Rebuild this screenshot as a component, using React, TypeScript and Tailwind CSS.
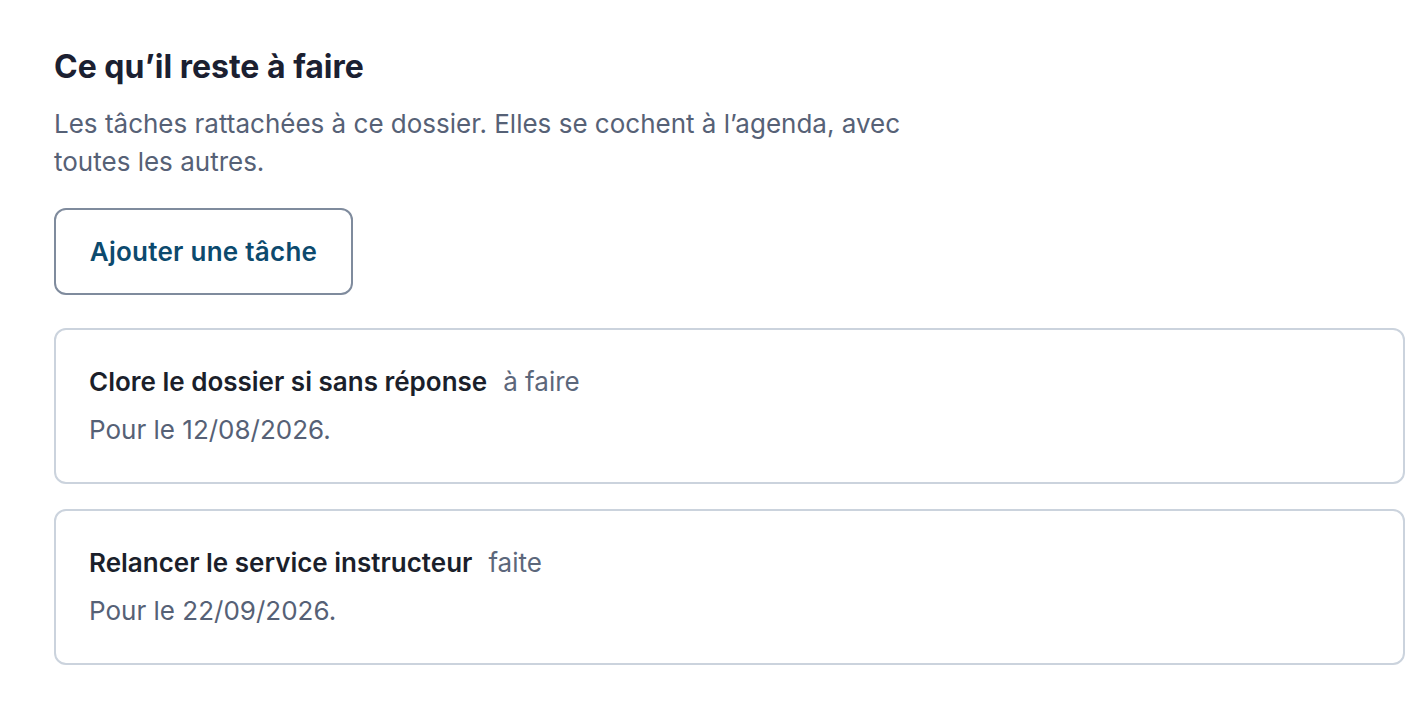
import React from 'react';

type Task = {
  title: string;
  status: string;
  due: string;
};

const tasks: Task[] = [
  { title: 'Clore le dossier si sans réponse', status: 'à faire', due: '12/08/2026' },
  { title: 'Relancer le service instructeur', status: 'faite', due: '22/09/2026' },
];

const TaskCard: React.FC<{ task: Task }> = ({ task }) => (
  <div className="rounded-[12px] border-2 border-[#cbd3dd] bg-white px-[33px] pt-[34px] pb-[34px]">
    <div className="flex items-baseline gap-[16px] text-[26px] leading-[36px]">
      <span className="font-semibold text-[#1b1f2b]">{task.title}</span>
      <span className="text-[#5c677b]">{task.status}</span>
    </div>
    <p className="mt-[12px] text-[26px] leading-[36px] text-[#566176]">Pour le {task.due}.</p>
  </div>
);

export default function App() {
  return (
    <div
      className="min-h-screen bg-white pl-[54px] pr-[11px] pt-[47px] pb-10"
      style={{ fontFamily: 'Inter, "Noto Sans", sans-serif' }}
    >
      {/* En-tête */}
      <h2 className="text-[32px] font-bold leading-[40px] text-[#1b2031]">
        Ce qu’il reste à faire
      </h2>
      <p className="mt-[18px] max-w-[880px] text-[26px] leading-[38px] text-[#566176]">
        Les tâches rattachées à ce dossier. Elles se cochent à l’agenda, avec toutes les autres.
      </p>

      <button className="mt-[27px] flex h-[87px] w-[299px] items-center justify-center rounded-[12px] border-2 border-[#7f8b9d] bg-white text-[26px] font-semibold tracking-[0.01em] text-[#0c4a6e]">
        Ajouter une tâche
      </button>

      {/* Liste des tâches */}
      <div className="mt-[33px] flex flex-col gap-[25px]">
        {tasks.map((t) => (
          <TaskCard key={t.title} task={t} />
        ))}
      </div>
    </div>
  );
}
